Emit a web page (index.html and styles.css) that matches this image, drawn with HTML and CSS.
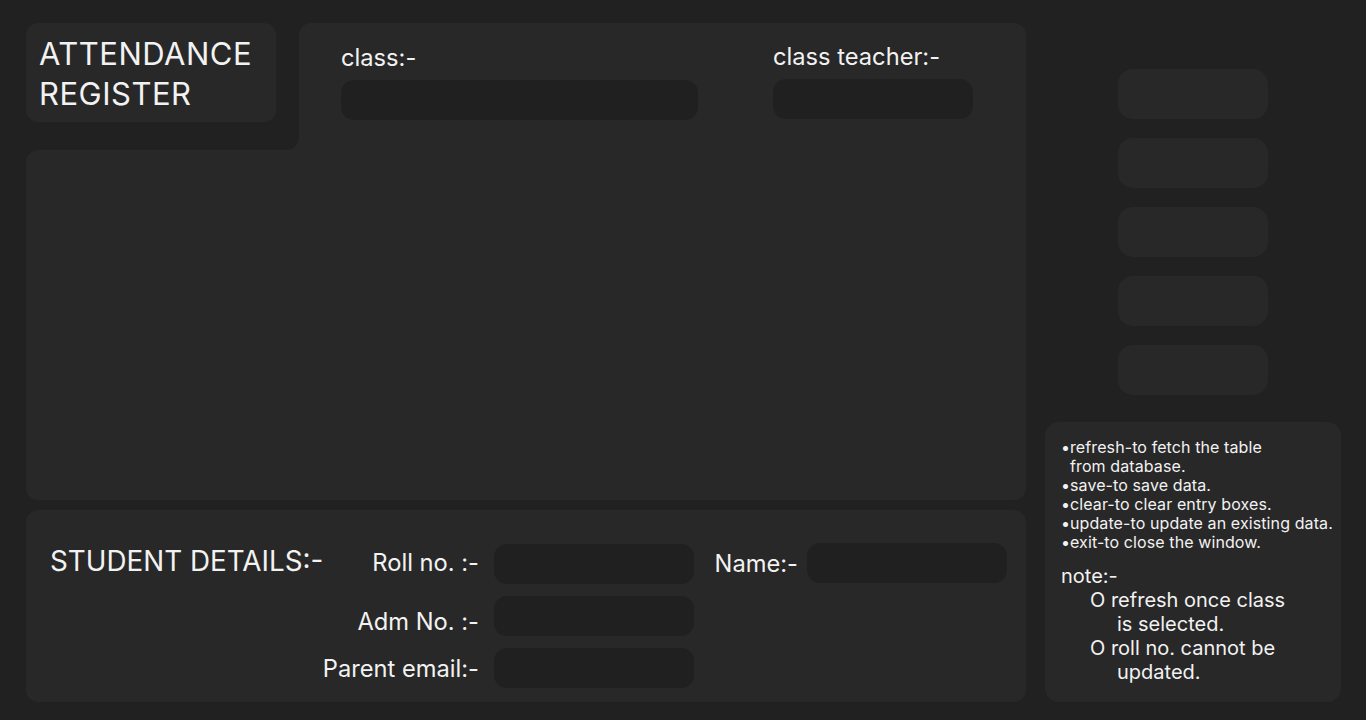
FILE: index.html
```html
<!DOCTYPE html>
<html lang="en">
<head>
<meta charset="utf-8">
<title>Attendance Register</title>
<link rel="stylesheet" href="styles.css">
</head>
<body>
<div class="app">
  <main class="left">
    <section class="register">
      <div class="title-slot">
        <div class="title-card">
          <h1 class="title">ATTENDANCE<br>REGISTER</h1>
        </div>
      </div>
      <div class="head">
        <div class="field">
          <span class="label">class:-</span>
          <div class="input input-class"></div>
        </div>
        <div class="field field-teacher">
          <span class="label">class teacher:-</span>
          <div class="input input-teacher"></div>
        </div>
      </div>
      <div class="table-area"></div>
    </section>

    <section class="student">
      <h2 class="student-title">STUDENT DETAILS:-</h2>
      <span class="flabel lab-roll">Roll no. :-</span>
      <div class="input finput in-roll"></div>
      <span class="flabel lab-name">Name:-</span>
      <div class="input finput in-name"></div>
      <span class="flabel lab-adm">Adm No. :-</span>
      <div class="input finput in-adm"></div>
      <span class="flabel lab-parent">Parent email:-</span>
      <div class="input finput in-parent"></div>
    </section>
  </main>

  <aside class="right">
    <div class="buttons">
      <div class="btn"></div>
      <div class="btn"></div>
      <div class="btn"></div>
      <div class="btn"></div>
      <div class="btn"></div>
    </div>
    <div class="notes">
      <ul class="legend">
        <li><span class="dot">•</span><span>refresh-to fetch the table<br>from database.</span></li>
        <li><span class="dot">•</span><span>save-to save data.</span></li>
        <li><span class="dot">•</span><span>clear-to clear entry boxes.</span></li>
        <li><span class="dot">•</span><span>update-to update an existing data.</span></li>
        <li><span class="dot">•</span><span>exit-to close the window.</span></li>
      </ul>
      <p class="note-title">note:-</p>
      <div class="note-item">O refresh once class<br><span class="cont">is selected.</span></div>
      <div class="note-item">O roll no. cannot be<br><span class="cont">updated.</span></div>
    </div>
  </aside>
</div>
</body>
</html>
```
FILE: styles.css
```css
* { box-sizing: border-box; }

html, body {
  margin: 0;
  padding: 0;
  height: 720px;
  overflow: hidden;
}

body {
  background: #212121;
  color: #f2f2f2;
  font-family: Inter, "Noto Sans", "Liberation Sans", sans-serif;
}

.app {
  display: flex;
  gap: 19px;
  height: 720px;
  padding: 23px 25px 18px 26px;
}

.left {
  width: 1000px;
  display: flex;
  flex-direction: column;
  gap: 10px;
}

/* ---------- register panel ---------- */
.register {
  display: grid;
  grid-template-columns: 273px 1fr;
  grid-template-rows: 127px 350px;
}

.title-slot {
  display: flex;
  align-items: flex-start;
}

.title-card {
  width: 250px;
  height: 99px;
  background: #282828;
  border-radius: 12px;
  padding: 11px 0 0 13px;
}

.title {
  margin: 0;
  font-size: 31px;
  font-weight: 400;
  line-height: 40px;
  letter-spacing: 0.5px;
}

.head {
  position: relative;
  background: #282828;
  border-radius: 12px 12px 0 0;
  padding: 20px 0 0 42px;
  display: flex;
  gap: 75px;
}

.head::before {
  content: "";
  position: absolute;
  left: -12px;
  bottom: 0;
  width: 12px;
  height: 12px;
  background: radial-gradient(circle at 0 0, transparent 11.5px, #282828 12px);
}

.field {
  display: flex;
  flex-direction: column;
  gap: 8px;
}

.field-teacher {
  margin-top: -1px;
}

.label {
  font-size: 23.7px;
  line-height: 29px;
}

.input {
  background: #202020;
  border-radius: 13px;
  height: 40px;
}

.input-class { width: 357px; }
.input-teacher { width: 200px; }

.table-area {
  grid-column: 1 / 3;
  background: #282828;
  border-radius: 12px 0 12px 12px;
}

/* ---------- student details ---------- */
.student {
  height: 192px;
  background: #282828;
  border-radius: 12px;
  padding: 34px 0 0 24px;
  display: grid;
  grid-template-columns: 273px 171px 200px 113px 200px;
  grid-template-rows: 40px 40px 40px;
  row-gap: 12px;
  align-items: center;
}

.student-title {
  grid-column: 1;
  grid-row: 1;
  margin: -6px 0 0 0;
  font-size: 27.8px;
  font-weight: 400;
  line-height: 34px;
  white-space: nowrap;
}

.flabel {
  font-size: 23.7px;
  line-height: 29px;
  text-align: right;
  justify-self: end;
  white-space: nowrap;
}

.lab-roll { grid-column: 2; grid-row: 1; padding-right: 15px; margin-top: -4px; }
.lab-adm { grid-column: 2; grid-row: 2; padding-right: 15px; margin-top: 10px; }
.lab-parent { grid-column: 2; grid-row: 3; padding-right: 15px; }
.lab-name { grid-column: 4; grid-row: 1; padding-right: 9px; margin-top: -2px; }

.finput { width: 200px; }
.in-roll { grid-column: 3; grid-row: 1; }
.in-adm { grid-column: 3; grid-row: 2; }
.in-parent { grid-column: 3; grid-row: 3; }
.in-name { grid-column: 5; grid-row: 1; margin-top: -2px; }

/* ---------- right column ---------- */
.right {
  width: 296px;
  display: flex;
  flex-direction: column;
  align-items: center;
}

.buttons {
  margin-top: 46px;
  display: flex;
  flex-direction: column;
  gap: 19px;
}

.btn {
  width: 150px;
  height: 50px;
  background: #282828;
  border-radius: 15px;
}

.notes {
  margin-top: auto;
  width: 296px;
  height: 280px;
  background: #282828;
  border-radius: 14px;
  padding: 16px 0 0 16px;
}

.legend {
  list-style: none;
  margin: 0;
  padding: 0;
  font-size: 16px;
  line-height: 19px;
  letter-spacing: 0.1px;
}

.legend li {
  display: flex;
}

.dot {
  width: 9px;
  flex: none;
}

.note-title {
  margin: 12px 0 0 0;
  font-size: 20px;
  line-height: 24px;
}

.note-item {
  margin-left: 29px;
  font-size: 20px;
  line-height: 24px;
}

.cont {
  padding-left: 27px;
}
```
